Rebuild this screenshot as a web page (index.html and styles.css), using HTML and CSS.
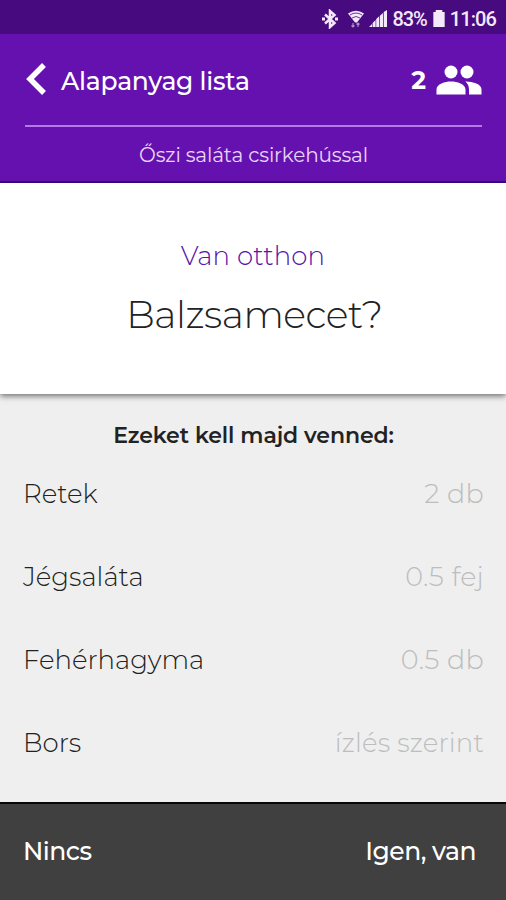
FILE: index.html
```html
<!DOCTYPE html>
<html lang="hu">
<head>
<meta charset="utf-8">
<title>Alapanyag lista</title>
<link rel="stylesheet" href="styles.css">
</head>
<body>
<div class="status">
  <svg class="bluetooth" viewBox="0 0 18 20"><path d="M4 5.500l9.500 8.500L9 18V2l4.500 4L4 14.500" fill="none" stroke="currentColor" stroke-width="2.500"/><path d="M1 8.600h3v3H1zM14 8.600h3v3h-3z" fill="currentColor"/></svg>
  <svg class="wifi" viewBox="0 0 18 20"><path d="M1 4.500Q9-1 17 4.500L10 13.500H8z" fill="currentColor"/><path d="M3 6Q9 2 15 6M5 9Q9 6 13 9" fill="none" stroke="#470a7f" stroke-width=".8"/><path d="M6 14v4M4.500 16.500L6 18l1.500-1.500M11 18v-4M9.500 15.500L11 14l1.500 1.500" fill="none" stroke="currentColor" stroke-width="1.200" opacity=".6"/></svg>
  <svg class="signal" viewBox="0 0 18 18"><path d="M0 17l3-3v3zM3.600 17v-4l3-3v7zM7.200 17V9l3-2.700V17zM10.900 17V5.700L14 3v14zM14.700 17V2L18 0v17z" fill="currentColor"/></svg>
  <span class="percent">83%</span>
  <svg class="battery" viewBox="0 0 12 18"><path d="M2.500 0h7v2H12v16H0V2h2.500z" fill="currentColor"/></svg>
  <span class="clock">11:06</span>
</div>
<header class="header">
  <div class="toolbar">
    <svg class="back" viewBox="0 0 20 32"><path d="M18 2L4 16l14 14" fill="none" stroke="currentColor" stroke-width="5.500"/></svg>
    <h1 class="title">Alapanyag lista</h1>
    <span class="count">2</span>
    <svg class="people" viewBox="0 0 46 30"><circle cx="15" cy="7" r="6.500"/><circle cx="31" cy="7" r="6.500"/><path d="M.5 29.500v-5C.5 19 9 16.500 15 16.500S29.500 19 29.500 24.500v5zM30 16.600c7 .2 15.500 2.400 15.500 7.900v5H33v-5c0-3.500-1.500-6-3.700-7.900z"/></svg>
  </div>
  <p class="recipe">Őszi saláta csirkehússal</p>
</header>
<section class="question">
  <p class="ask">Van otthon</p>
  <h2 class="item">Balzsamecet?</h2>
</section>
<main class="shopping">
  <h3 class="heading">Ezeket kell majd venned:</h3>
  <ul class="list">
    <li><span>Retek</span><span class="amount">2 db</span></li>
    <li><span>Jégsaláta</span><span class="amount">0.5 fej</span></li>
    <li><span>Fehérhagyma</span><span class="amount">0.5 db</span></li>
    <li><span>Bors</span><span class="amount words">ízlés szerint</span></li>
  </ul>
</main>
<footer class="actions"><span>Nincs</span><span>Igen, van</span></footer>
</body>
</html>
```
FILE: styles.css
```css
* { box-sizing: border-box; margin: 0; padding: 0; }
body { width: 506px; height: 900px; display: flex; flex-direction: column; overflow: hidden; font-family: Montserrat, Inter, sans-serif; color: #222; background: #efefef; }
svg { display: block; flex: none; }
.status { height: 34px; flex: none; display: flex; align-items: center; justify-content: flex-end; padding: 3px 10px 0 0; background: #470a7f; color: #f3e9fa; font: 500 20px/30px Roboto, sans-serif; }
.bluetooth { width: 18px; height: 20px; margin-right: 8px; }
.wifi { width: 18px; height: 20px; margin-right: 4px; }
.signal { width: 18px; height: 18px; margin-right: 6px; }
.percent { letter-spacing: -1.1px; }
.battery { width: 12px; height: 17px; margin: 0 5px 0 6px; }
.clock { letter-spacing: -.9px; }
.header { height: 149px; flex: none; padding: 0 24px 0 25px; background: #6511b0; border-bottom: 2px solid #3b078f; color: #fff; }
.toolbar { height: 93px; display: flex; align-items: center; border-bottom: 2px solid #b779e8; }
.back { width: 20px; height: 32px; margin: 0 15px 2px 1px; }
.title { font-size: 25px; font-weight: 500; line-height: 34px; letter-spacing: -.25px; flex: 1; padding-top: 2px; }
.count { font-size: 25px; font-weight: 700; line-height: 34px; margin-right: 10px; padding-top: 1px; }
.people { width: 46px; height: 30px; fill: currentColor; }
.recipe { text-align: center; font-size: 20px; line-height: 28px; padding-top: 14px; color: #e7d5f7; letter-spacing: -.15px; }
.question { position: relative; height: 211px; flex: none; background: #fff; text-align: center; padding-top: 55px; box-shadow: 0 2px 6px rgba(0,0,0,.55); }
.ask { font-size: 26px; font-weight: 300; line-height: 36px; color: #5714a8; letter-spacing: .1px; }
.item { font-size: 38px; font-weight: 300; line-height: 50px; margin-top: 16px; letter-spacing: -.5px; padding-left: 3px; }
.shopping { flex: 1; padding: 26px 22px 0 23px; }
.heading { text-align: center; font-size: 22px; font-weight: 600; line-height: 32px; letter-spacing: -.1px; }
.list { list-style: none; padding-top: 1px; }
.list li { height: 83px; display: flex; justify-content: space-between; font-size: 26px; font-weight: 300; line-height: 83px; }
.list .amount { color: #bdbdbd; font-size: 27px; line-height: 81px; letter-spacing: .3px; }
.list .words { font-size: 26px; line-height: 83px; letter-spacing: .2px; }
.actions { height: 98px; flex: none; display: flex; justify-content: space-between; align-items: center; padding: 0 30px 2px 23px; background: #404040; border-top: 2px solid #080808; color: #fff; font-size: 25px; font-weight: 500; letter-spacing: -.5px; }
```
